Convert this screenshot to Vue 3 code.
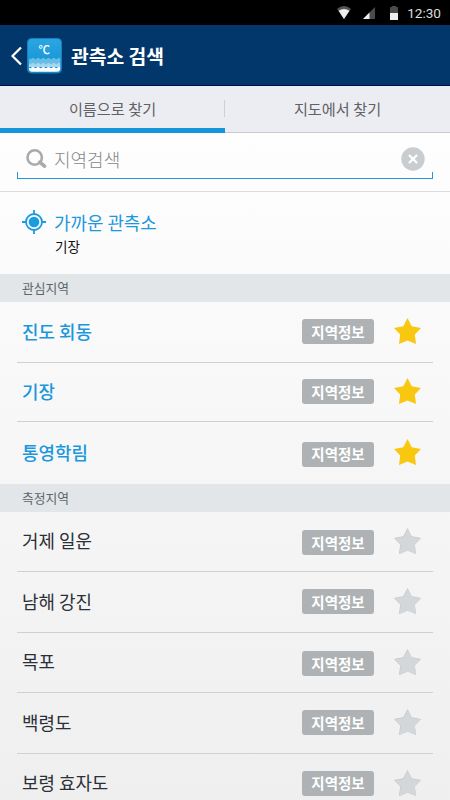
<script setup>
import { ref } from 'vue';

const keyword = ref('');

const favorites = ref([
    { name: '진도 회동', height: 61 },
    { name: '기장', height: 59 },
    { name: '통영학림', height: 62, low: true }
])

const stations = ref([
    { name: '거제 일운', height: 60, low: true },
    { name: '남해 강진', height: 61 },
    { name: '목포', height: 60, low: true },
    { name: '백령도', height: 61 },
    { name: '보령 효자도', height: 60 }
])

const starPath = 'M13.5 0 L17.7 8.3 L27 10.1 L20.8 16.6 L22 26 L13.5 22.5 L5 26 L6.2 16.6 L0 10.1 L9.3 8.3 Z'
</script>

<template>
    <div class="screen">
        <div class="status-bar">
            <svg class="wifi" width="14" height="13" viewBox="0 0 14 13">
                <path d="M0 3 Q7 -3 14 3 L7 13 Z" fill="#555" />
                <path d="M1.6 4.8 Q7 1.2 12.4 4.8 L7 13 Z" fill="#eee" />
            </svg>
            <svg class="signal" width="12" height="12" viewBox="0 0 12 12">
                <path d="M0 12 L12 0 V12 Z" fill="#4b4b4b" />
                <path d="M0 12 L6.5 5.5 V12 Z" fill="#eee" />
            </svg>
            <svg class="battery" width="8" height="14" viewBox="0 0 8 14">
                <path d="M0 2 Q0 1 1 1 H2 V0 H6 V1 H7 Q8 1 8 2 V7 H0 Z" fill="#4b4b4b" />
                <rect y="7" width="8" height="7" fill="#eee" />
            </svg>
            <span>12:30</span>
        </div>

        <header class="app-bar">
            <svg class="back" width="12" height="20" viewBox="0 0 12 20">
                <path d="M11 1.5 L2.5 10 L11 18.5" fill="none" stroke="#fff" stroke-width="2.2" />
            </svg>
            <svg class="logo" width="35" height="36" viewBox="0 0 35 36">
                <defs>
                    <linearGradient id="logoFill" x1="0" y1="0" x2="0" y2="1">
                        <stop offset="0" stop-color="#2ba6e0" />
                        <stop offset="1" stop-color="#0e90d4" />
                    </linearGradient>
                </defs>
                <rect x=".5" y=".5" width="34" height="34.5" rx="4" fill="url(#logoFill)" stroke="#1c7fbd" />
                <path d="M2 20.5 q1.3 1.6 2.6 0 t2.6 0 t2.6 0 t2.6 0 t2.6 0 t2.6 0 t2.6 0 t2.6 0 t2.6 0 t2.6 0 t2.6 0 t2.6 0 V26 H2 Z" fill="#68bde7" />
                <path d="M2 25.5 q1.3 1.6 2.6 0 t2.6 0 t2.6 0 t2.6 0 t2.6 0 t2.6 0 t2.6 0 t2.6 0 t2.6 0 t2.6 0 t2.6 0 t2.6 0 V29 H2 Z" fill="#a3d6ef" />
                <path d="M2 29.5 q1.3 1.6 2.6 0 t2.6 0 t2.6 0 t2.6 0 t2.6 0 t2.6 0 t2.6 0 t2.6 0 t2.6 0 t2.6 0 t2.6 0 t2.6 0 V30.5 Q33 33.8 30 33.8 H5 Q2 33.8 2 30.5 Z" fill="#fff" />
                <text x="11.5" y="16" font-size="11.5" font-weight="500" fill="#fff">℃</text>
            </svg>
            <h1>관측소 검색</h1>
        </header>

        <nav class="tabs">
            <div class="tab active">이름으로 찾기</div>
            <div class="tab">지도에서 찾기</div>
        </nav>

        <div class="search">
            <div class="search-field">
                <svg width="21" height="20" viewBox="0 0 21 20">
                    <circle cx="8.7" cy="8.5" r="7.2" fill="none" stroke="#a8abae" stroke-width="2.6" />
                    <path d="M13.8 13.2 L18.5 17.2" stroke="#a8abae" stroke-width="3.6" stroke-linecap="round" />
                </svg>
                <input v-model="keyword" type="text" placeholder="지역검색">
                <svg class="clear" width="24" height="24" viewBox="0 0 24 24" @click="keyword = ''">
                    <circle cx="12" cy="12" r="11.7" fill="#c9cdd0" />
                    <path d="M8 8 L16 16 M16 8 L8 16" stroke="#fff" stroke-width="2.3" />
                </svg>
            </div>
        </div>

        <div class="nearest">
            <svg width="24" height="24" viewBox="0 0 24 24">
                <circle cx="12" cy="12" r="8" fill="none" stroke="#1b9be0" stroke-width="1.8" />
                <circle cx="12" cy="12" r="5.3" fill="#1b9be0" />
                <path d="M12 0 V4 M12 20 V24 M0 12 H4 M20 12 H24" stroke="#1b9be0" stroke-width="1.8" />
            </svg>
            <div>
                <p class="nearest-title">가까운 관측소</p>
                <p class="nearest-name">기장</p>
            </div>
        </div>

        <h2>관심지역</h2>
        <ul class="favorites">
            <li v-for="item in favorites" :key="item.name" :style="{ height: `${item.height}px` }">
                <span class="name">{{ item.name }}</span>
                <button :class="{ low: item.low }">지역정보</button>
                <svg class="star" width="27" height="26" viewBox="0 0 27 26">
                    <path :d="starPath" fill="#f8c810" />
                </svg>
            </li>
        </ul>

        <h2>측정지역</h2>
        <ul>
            <li v-for="item in stations" :key="item.name" :style="{ height: `${item.height}px` }">
                <span class="name">{{ item.name }}</span>
                <button :class="{ low: item.low }">지역정보</button>
                <svg class="star" width="27" height="26" viewBox="0 0 27 26">
                    <path :d="starPath" fill="#bfc4c8" />
                    <path :d="starPath" fill="#d3d7da" transform="translate(.7 .8) scale(.97)" />
                </svg>
            </li>
        </ul>
    </div>
</template>

<style>
body{
    margin: 0;
    overflow: hidden;
}
</style>

<style scoped>
.screen{
    width: 450px;
    height: 800px;
    overflow: hidden;
    background: linear-gradient(#fefefe 130px, #fafafa 300px, #efefef);
    font-family: "Noto Sans CJK KR", sans-serif;
}
.screen *{
    box-sizing: border-box;
}
h1, h2, p, ul{
    margin: 0;
    padding: 0;
}
.status-bar{
    display: flex;
    justify-content: flex-end;
    align-items: center;
    height: 25px;
    padding-right: 9px;
    background-color: #000;
    color: #dedede;
    font: 13.6px/25px Roboto, sans-serif;
}
.status-bar span{
    padding-top: 1px;
}
.wifi{
    margin-right: 12px;
}
.signal{
    margin-right: 15px;
}
.battery{
    margin-right: 9px;
}
.app-bar{
    display: flex;
    align-items: center;
    height: 61px;
    padding: 1px 0 0 10px;
    background-color: #02376b;
    border-bottom: 1px solid #000850;
}
.logo{
    margin-left: 5px;
}
h1{
    margin-left: 9px;
    color: #fff;
    font-size: 19.3px;
    font-weight: 700;
    line-height: 28px;
}
.tabs{
    display: flex;
    height: 47px;
    background-color: #ecedf2;
}
.tab{
    position: relative;
    flex: 1;
    border-bottom: 1px solid #c9cacd;
    color: #5f6164;
    font-size: 15.2px;
    line-height: 44px;
    text-align: center;
}
.tab.active{
    border-bottom: 5px solid #1496da;
}
.tab.active::after{
    content: "";
    position: absolute;
    right: 0;
    top: 14px;
    width: 1px;
    height: 17px;
    background-color: #cfd0d4;
}
.search{
    height: 59px;
    padding: 8px 17px 0;
    border-bottom: 1px solid #dcdcdc;
}
.search-field{
    display: flex;
    align-items: center;
    height: 38px;
    padding: 0 8px 2px 9px;
    background:
        linear-gradient(#2796d8, #2796d8) left bottom / 1px 6px no-repeat,
        linear-gradient(#2796d8, #2796d8) right bottom / 1px 6px no-repeat;
    border-bottom: 1px solid #2796d8;
}
input{
    flex: 1;
    width: 0;
    height: 28px;
    margin-left: 7px;
    padding: 0;
    border: 0;
    outline: 0;
    background: none;
    font-family: inherit;
    font-size: 18px;
    font-weight: 300;
}
input::placeholder{
    color: #85888c;
    opacity: 1;
}
.nearest{
    display: flex;
    height: 82px;
    padding: 18px 22px 0;
}
.nearest > div{
    margin-left: 8px;
}
.nearest-title{
    color: #1b97dc;
    font-size: 17.9px;
    line-height: 25px;
}
.nearest-name{
    padding-left: 1px;
    color: #111;
    font-size: 13.6px;
    line-height: 22px;
}
h2{
    height: 28px;
    padding-left: 22px;
    background-color: #e2e6e9;
    color: #606468;
    font-size: 12.8px;
    font-weight: 400;
    line-height: 27px;
}
ul{
    padding: 0 17px;
    list-style: none;
}
li{
    display: flex;
    align-items: center;
    padding: 0 12px 1px 5px;
    border-bottom: 1px solid #cfd0d1;
}
.favorites li:last-child{
    border-bottom: 0;
}
.name{
    flex: 1;
    padding-bottom: 2px;
    color: #2b2f36;
    font-size: 17.9px;
    line-height: 26px;
}
.favorites .name{
    color: #1b97dc;
    font-weight: 500;
}
.star{
    margin-bottom: 1px;
}
button{
    width: 72px;
    height: 25px;
    margin-right: 20px;
    padding: 0;
    border: 0;
    border-radius: 3px;
    background-color: #aeb2b5;
    color: #fff;
    font-family: inherit;
    font-size: 14.5px;
    font-weight: 700;
    line-height: 24px;
}
button.low{
    margin-top: 3px;
}
</style>
